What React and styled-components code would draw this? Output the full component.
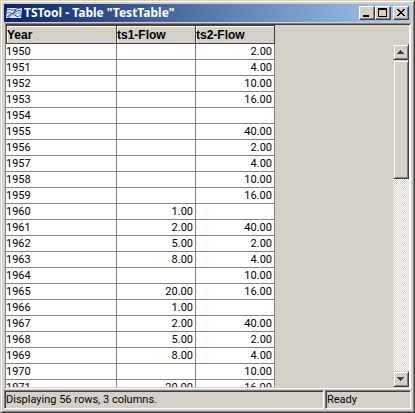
import React from "react";
import styled, { createGlobalStyle, css } from "styled-components";

const face = "#d4d0c8";
const dark = "#404040";
const mid = "#808080";

const GlobalStyle = createGlobalStyle`
  * { box-sizing: border-box; }
  html, body, #root { height: 100%; margin: 0; }
  body { background: ${face}; overflow: hidden; }
`;

const Window = styled.main`
  display: flex;
  flex-direction: column;
  height: 100vh;
  padding: 2px;
  background: ${face};
  border: 1px solid;
  border-color: ${face} ${dark} ${dark} ${face};
  box-shadow: inset 1px 1px #fff, inset -1px -1px ${mid};
  font: 11px/14px Roboto, "Liberation Sans", sans-serif;
  color: #000;
`;

const TitleBar = styled.header`
  display: flex;
  flex: none;
  align-items: center;
  height: 18px;
  margin: 1px;
  padding: 0 2px;
  background: linear-gradient(90deg, #0a246a, #a6caf0);
`;

const AppIcon = styled.svg`
  flex: none;
  width: 16px;
  height: 16px;
`;

const Title = styled.h1`
  flex: 1;
  margin: 0 0 0 2px;
  overflow: hidden;
  white-space: nowrap;
  font: bold 12px/18px "Noto Sans", sans-serif;
  color: #fff;
`;

const CaptionButton = styled.button`
  display: flex;
  flex: none;
  width: 16px;
  height: 14px;
  padding: 0;
  margin-left: ${(p) => (p.$apart ? "2px" : "0")};
  background: ${face};
  border: 1px solid;
  border-color: #fff ${dark} ${dark} #fff;
  box-shadow: inset -1px -1px ${mid};
`;

const Glyph = styled.svg`
  display: block;
  width: 14px;
  height: 12px;
`;

const Client = styled.div`
  display: flex;
  flex: 1;
  min-height: 0;
  margin: 0 1px 0 2px;
  border: 1px solid;
  border-color: ${mid} #fff #fff ${mid};
  box-shadow: inset 0 1px ${dark}, inset -1px 0 #fff;
  padding: 1px 1px 1px 0;
`;

const TablePane = styled.div`
  flex: 1;
  min-width: 0;
  overflow: hidden;
`;

const Table = styled.table`
  width: 269px;
  table-layout: fixed;
  border-collapse: separate;
  border-spacing: 0;
`;

const Column = styled.col`
  width: ${(p) => (p.$wide ? "111px" : "79px")};
`;

const HeadCell = styled.th`
  height: 19px;
  padding: 2px 0 0;
  background: ${face};
  border: 1px solid ${dark};
  border-left-width: ${(p) => (p.$first ? "1px" : "0")};
  box-shadow: inset 1px 1px #fff;
  text-align: left;
  font: bold 12px/15px "Liberation Sans", Arial, sans-serif;
`;

const Cell = styled.td`
  height: 16px;
  padding: 0 ${(p) => (p.$number ? "2px" : "0")} 0 0;
  background: #fff;
  border-right: 1px solid ${mid};
  border-bottom: 1px solid ${mid};
  text-align: ${(p) => (p.$number ? "right" : "left")};
  line-height: 15px;
`;

const ScrollBar = styled.div`
  display: flex;
  flex: none;
  flex-direction: column;
  width: 16px;
  margin-top: 19px;
  background: repeating-conic-gradient(#fff 0 25%, ${face} 0 50%) 0 0 / 2px 2px;
`;

const raised = css`
  background: ${face};
  border: 1px solid;
  border-color: ${face} ${dark} ${dark} ${face};
  box-shadow: inset 1px 1px #fff, inset -1px -1px ${mid};
`;

const ScrollButton = styled.button`
  ${raised}
  flex: none;
  width: 16px;
  height: 16px;
  padding: 0;
`;

const ArrowGlyph = styled.svg`
  display: block;
  width: 14px;
  height: 14px;
`;

const Thumb = styled.div`
  ${raised}
  height: 119px;
`;

const Track = styled.div`
  flex: 1;
`;

const StatusBar = styled.footer`
  display: flex;
  flex: none;
  gap: 1px;
  margin: 1px;
`;

const StatusField = styled.output`
  flex: ${(p) => (p.$short ? "0 0 86px" : "1")};
  height: 19px;
  border: 1px solid;
  border-color: ${mid} #fff #fff ${mid};
  box-shadow: inset 1px 1px ${dark};
  padding-left: 1px;
  line-height: 18px;
  white-space: nowrap;
`;

const rows = [
  [1950, "", "2.00"], [1951, "", "4.00"], [1952, "", "10.00"], [1953, "", "16.00"],
  [1954, "", ""], [1955, "", "40.00"], [1956, "", "2.00"], [1957, "", "4.00"],
  [1958, "", "10.00"], [1959, "", "16.00"], [1960, "1.00", ""], [1961, "2.00", "40.00"],
  [1962, "5.00", "2.00"], [1963, "8.00", "4.00"], [1964, "", "10.00"],
  [1965, "20.00", "16.00"], [1966, "1.00", ""], [1967, "2.00", "40.00"],
  [1968, "5.00", "2.00"], [1969, "8.00", "4.00"], [1970, "", "10.00"],
  [1971, "20.00", "16.00"],
];

function Arrow({ down }) {
  return (
    <ArrowGlyph viewBox="0 0 14 14" shapeRendering="crispEdges" aria-hidden="true">
      <path fill={dark} d={down ? "M3 5h7v1h-1v1h-1v1h-1v1h-1v-1h-1v-1h-1v-1h-1z" : "M3 9h7v-1h-1v-1h-1v-1h-1v-1h-1v1h-1v1h-1v1h-1z"} />
    </ArrowGlyph>
  );
}

export default function App() {
  return (
    <>
      <GlobalStyle />
      <Window>
        <TitleBar>
          <AppIcon viewBox="0 0 16 16" aria-hidden="true">
            <path fill="#dfe6ee" d="M1 3h15l-1 10H0z" />
            <path fill="none" stroke="#2c5688" d="M1 5c3-2 4 1 7 0s4-2 7-2M1 8c4-2 4 2 7 0s4-3 7-2M1 12c3-2 5-5 8-2s4 1 6 0M2 13l8-8" />
            <path fill="none" stroke="#7fa0c0" d="M2 10c3-1 5 1 8-1s3 0 5-1" />
          </AppIcon>
          <Title>TSTool - Table "TestTable"</Title>
          <CaptionButton aria-label="Minimize">
            <Glyph viewBox="0 0 14 12"><path d="M3 8h6v2H3z" /></Glyph>
          </CaptionButton>
          <CaptionButton aria-label="Maximize">
            <Glyph viewBox="0 0 14 12"><path fillRule="evenodd" d="M2 1h9v9H2zM3 3v6h7V3z" /></Glyph>
          </CaptionButton>
          <CaptionButton aria-label="Close" $apart>
            <Glyph viewBox="0 0 14 12" shapeRendering="crispEdges">
              <path d="M3 2h2v1h1v1h2v-1h1v-1h2v1h-1v1h-1v1h-1v1h1v1h1v1h1v1h-2v-1h-1v-1h-2v1h-1v1h-2v-1h1v-1h1v-1h1v-1h-1v-1h-1v-1h-1z" />
            </Glyph>
          </CaptionButton>
        </TitleBar>
        <Client>
          <TablePane>
            <Table>
              <colgroup><Column $wide /><Column /><Column /></colgroup>
              <thead>
                <tr><HeadCell $first>Year</HeadCell><HeadCell>ts1-Flow</HeadCell><HeadCell>ts2-Flow</HeadCell></tr>
              </thead>
              <tbody>
                {rows.map(([year, a, b]) => (
                  <tr key={year}><Cell>{year}</Cell><Cell $number>{a}</Cell><Cell $number>{b}</Cell></tr>
                ))}
              </tbody>
            </Table>
          </TablePane>
          <ScrollBar>
            <ScrollButton aria-label="Scroll up"><Arrow /></ScrollButton>
            <Thumb />
            <Track />
            <ScrollButton aria-label="Scroll down"><Arrow down /></ScrollButton>
          </ScrollBar>
        </Client>
        <StatusBar>
          <StatusField>Displaying 56 rows, 3 columns.</StatusField>
          <StatusField $short>Ready</StatusField>
        </StatusBar>
      </Window>
    </>
  );
}
